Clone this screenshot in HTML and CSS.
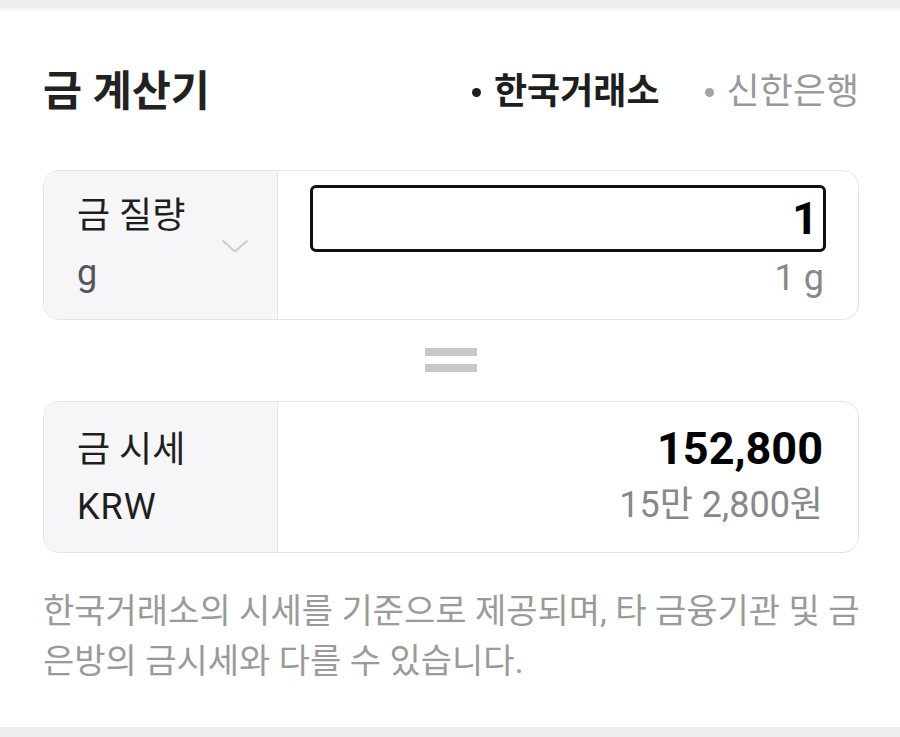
FILE: index.html
```html
<!DOCTYPE html>
<html lang="ko">
<head>
<meta charset="utf-8">
<link rel="stylesheet" href="styles.css">
</head>
<body>
<div class="band band-top"></div>
<main class="calc">
  <header class="head">
    <h1 class="title">금 계산기</h1>
    <nav class="tabs">
      <span class="tab tab-active"><i class="dot"></i>한국거래소</span>
      <span class="tab"><i class="dot"></i>신한은행</span>
    </nav>
  </header>

  <section class="card card-weight">
    <div class="side side-select">
      <div class="side-text">
        <div class="label">금 질량</div>
        <div class="unit">g</div>
      </div>
      <svg class="chev" width="28" height="14" viewBox="0 0 28 14"><path d="M1.5 1.5 L14 12.5 L26.5 1.5" fill="none" stroke="#cbcbcb" stroke-width="1.8"/></svg>
    </div>
    <div class="main main-input">
      <div class="input-box"><span class="input-val">1</span></div>
      <div class="sub">1 g</div>
    </div>
  </section>

  <div class="equals"><span></span><span></span></div>

  <section class="card card-price">
    <div class="side side-price">
      <div class="label">금 시세</div>
      <div class="label latin">KRW</div>
    </div>
    <div class="main main-price">
      <div class="price">152,800</div>
      <div class="sub">15만 2,800원</div>
    </div>
  </section>

  <p class="note">한국거래소의 시세를 기준으로 제공되며, 타 금융기관 및 금<br>은방의 금시세와 다를 수 있습니다.</p>
</main>
<div class="band band-bottom"></div>
</body>
</html>
```

FILE: styles.css
```css
* { box-sizing: border-box; margin: 0; padding: 0; }
html, body { background: #ffffff; }
body {
  width: 900px;
  height: 737px;
  overflow: hidden;
  font-family: Roboto, "Noto Sans CJK KR", sans-serif;
  color: #222222;
  display: flex;
  flex-direction: column;
}
.band { background: #efeff1; flex: none; }
.band-top { height: 11px; border-bottom: 3px solid #f5f5f7; }
.band-bottom { height: 10px; margin-top: auto; }

.calc { padding: 0 41px 0 43px; }

.head {
  display: flex;
  justify-content: space-between;
  align-items: center;
  height: 48px;
  margin-top: 57px;
}
.title {
  font-size: 42.5px;
  font-weight: 700;
  line-height: 48px;
  color: #222222;
}
.tabs { display: flex; gap: 45px; }
.tab {
  display: flex;
  align-items: center;
  font-size: 36px;
  line-height: 44px;
  color: #9a9a9a;
}
.tab-active { color: #1e1e1e; font-weight: 700; }
.dot {
  width: 9px; height: 9px; border-radius: 50%;
  background: currentColor;
  margin-right: 13px;
}
.tab:not(.tab-active) .dot { background: #a3a3a3; }

.card {
  display: grid;
  grid-template-columns: 234px 1fr;
  border: 1px solid #e4e4e6;
  border-radius: 16px;
  overflow: hidden;
}
.card-weight { margin-top: 54px; height: 150px; }
.card-price { height: 152px; }

.side {
  background: #f6f6f8;
  border-right: 1px solid #e6e6e8;
  padding-left: 33px;
}
.side-select {
  display: flex;
  align-items: center;
  padding-right: 28px;
}
.side-text { flex: 1; }
.label { font-size: 36px; line-height: 57px; color: #1e1e1e; }
.latin { letter-spacing: 1px; }
.unit { font-size: 36px; line-height: 57px; color: #555555; }
.chev { display: block; margin-top: 2px; }

.main-input { padding: 14px 32px 0 32px; }
.input-box {
  height: 67px;
  border: 3px solid #111111;
  border-radius: 6px;
  display: flex;
  align-items: center;
  justify-content: flex-end;
  padding-right: 5px;
}
.input-val { font-size: 45px; font-weight: 700; color: #000; line-height: 1; }
.sub { text-align: right; font-size: 36px; line-height: 52px; color: #888888; }
.main-input .sub { padding-right: 2px; }

.side-price { display: flex; flex-direction: column; justify-content: center; padding-top: 3px; }
.main-price {
  padding: 0 35px 0 0;
  display: flex;
  flex-direction: column;
  justify-content: center;
}
.price { text-align: right; font-size: 45px; font-weight: 700; line-height: 57px; color: #000; }
.main-price .sub { line-height: 57px; }

.equals {
  display: flex;
  flex-direction: column;
  align-items: center;
  gap: 8px;
  padding: 28px 0 29px;
}
.equals span { display: block; width: 52px; height: 8px; background: #c8c8c8; }

.note {
  margin-top: 33px;
  font-size: 34px;
  line-height: 50px;
  color: #9a9a9a;
  white-space: nowrap;
}
```
